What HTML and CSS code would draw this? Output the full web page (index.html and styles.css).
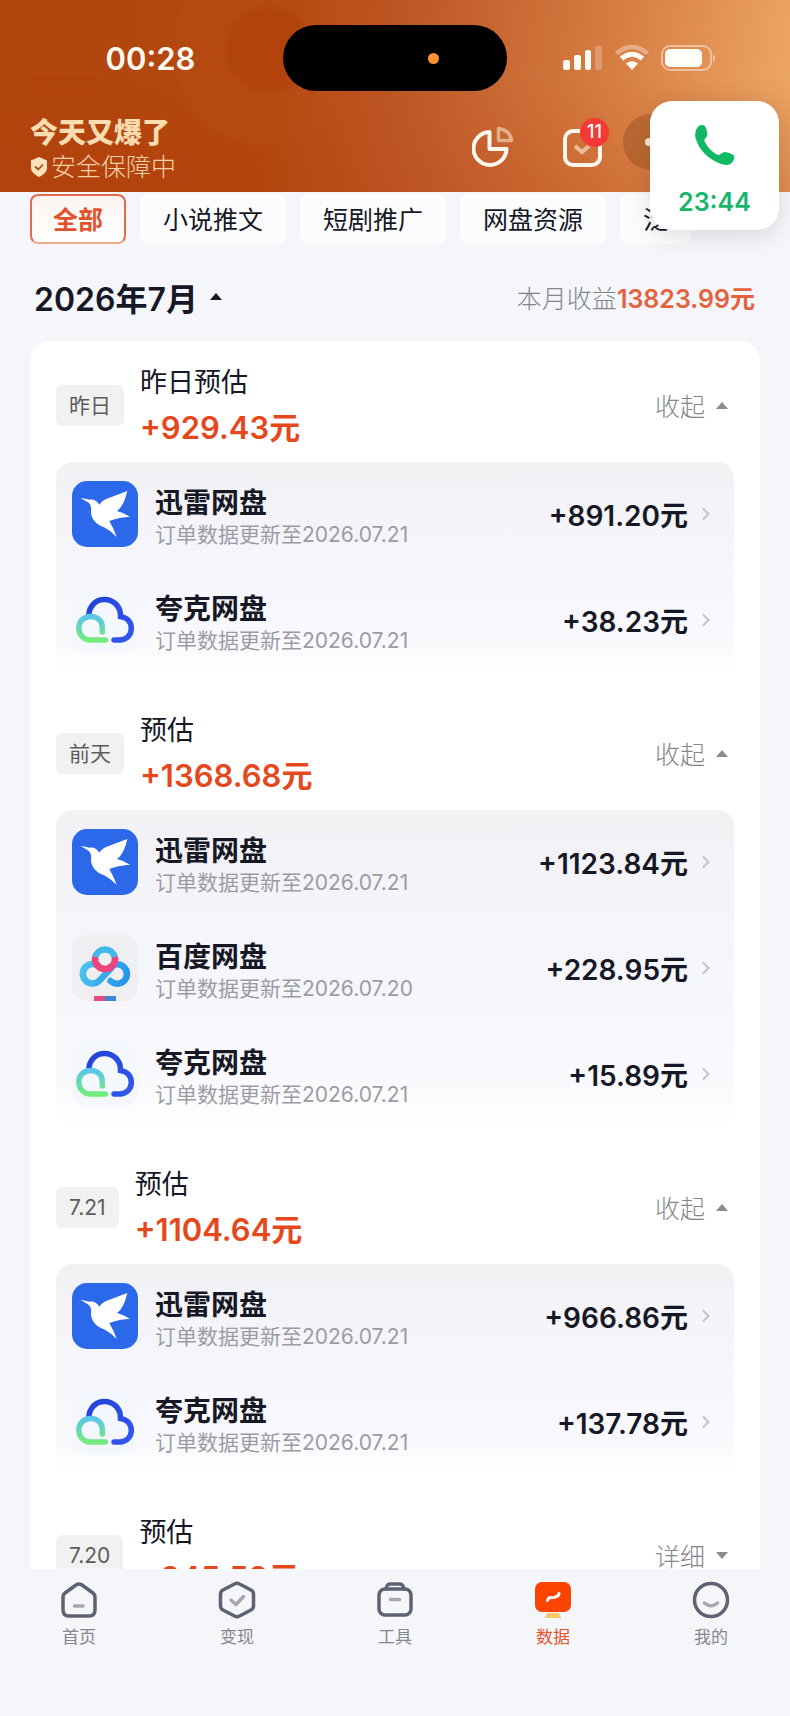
FILE: index.html
```html
<!DOCTYPE html>
<html lang="zh-CN">
<head>
<meta charset="utf-8">
<meta name="viewport" content="width=device-width, initial-scale=1">
<title>数据</title>
<link rel="stylesheet" href="styles.css">
</head>
<body>
<svg class="defs" aria-hidden="true">
  <defs>
    <linearGradient id="quark-green" x1="0" y1="0" x2="0" y2="1">
      <stop offset="0" stop-color="#5ac6ea"/><stop offset="1" stop-color="#74ec7c"/>
    </linearGradient>
    <linearGradient id="quark-blue" x1="0" y1="0" x2="1" y2="1">
      <stop offset="0" stop-color="#2443d8"/><stop offset="1" stop-color="#3158ee"/>
    </linearGradient>
    <linearGradient id="baidu-blue" gradientUnits="userSpaceOnUse" x1="8" y1="30" x2="58" y2="48">
      <stop offset="0" stop-color="#4cc6ee"/><stop offset="1" stop-color="#2290ea"/>
    </linearGradient>
    <symbol id="logo-xunlei" viewBox="0 0 66 66">
      <rect width="66" height="66" rx="15" fill="#2b69ea"/>
      <path fill="#fff" d="M8.500 17 Q14 17.500 17.500 18.800 C21 17.500 25 19.500 27.300 23.800 C29 21 31 19.500 33.500 18.300 L55.300 10 C54 15 53 19 51 22.500 C49.500 25.500 47.500 28 45 30 Q51 31.500 58 35.700 Q48 36 37.300 40 Q42 48 44.700 56 Q39 50 33 46.700 C28 45 24.500 43 22 39.500 C19.500 36 18.500 32.500 19.200 28.500 C19.300 24.500 17.500 22 15 20.800 Z"/>
    </symbol>
    <symbol id="logo-quark" viewBox="0 0 66 66">
      <rect width="66" height="66" rx="15" fill="#f4f7fe"/>
      <path d="M16.800 28 C17.500 18.500 24 12.500 32.500 12.500 C41.500 12.500 49 19.500 48.500 29.500 C55 30.500 59.300 35 59.300 41.500 C59.300 48 54.500 53 48 53 H42" fill="none" stroke="url(#quark-blue)" stroke-width="5.500" stroke-linecap="round"/>
      <path d="M30.300 45 V40.500 C30.300 34 25.500 29.500 18.500 29.500 C12 29.500 6.800 34.500 6.800 41 C6.800 48 12 53 18.500 53 H33.500" fill="none" stroke="url(#quark-green)" stroke-width="5.500" stroke-linecap="round"/>
    </symbol>
    <symbol id="logo-baidu" viewBox="0 0 66 66">
      <rect width="66" height="66" rx="15" fill="#efeff1"/>
      <g fill="none" stroke-width="6.500" stroke-linecap="round">
        <path d="M38.500 46 A9.700 9.700 0 1 0 38 32.500" stroke="url(#baidu-blue)"/>
        <path d="M40.500 31.500 L27.500 45.500 A9.700 9.700 0 1 1 27.500 32" stroke="url(#baidu-blue)"/>
        <path d="M23.200 22.500 A10 10 0 0 1 42.800 22.500" stroke="#3fb8ec" stroke-linecap="butt"/>
        <path d="M23.200 22 A10 10 0 1 0 42.800 22" stroke="#f2427a" stroke-linecap="butt"/>
      </g>
      <path d="M22 61h11v5H22z" fill="#ea4a80"/><path d="M33 61h11v5H33z" fill="#3a86dc"/>
    </symbol>
    <symbol id="chevron" viewBox="0 0 8 14">
      <path d="M1 1.500 6.500 7 1 12.500" fill="none" stroke="#c3c4c9" stroke-width="2"/>
    </symbol>
  </defs>
</svg>

<div class="app">
  <header class="header">
    <div class="status">
      <time class="status-time">00:28</time>
      <div class="island"><span class="island-dot"></span></div>
      <div class="status-icons">
        <svg width="40" height="26" viewBox="0 0 40 26" fill="#fffaf2" aria-hidden="true">
          <rect x="0" y="15" width="7" height="10" rx="2"/><rect x="11" y="10" width="7" height="15" rx="2"/><rect x="22" y="5" width="6" height="20" rx="2"/><rect x="32" y="1" width="7" height="24" rx="2" opacity=".25"/>
        </svg>
        <svg width="34" height="26" viewBox="0 0 34 26" fill="none" aria-hidden="true">
          <path d="M1.500 8.500 Q17 -4.500 32.500 8.500" stroke="#fff" stroke-width="4.500" opacity=".35"/>
          <path d="M6.500 13.500 Q17 5 27.500 13.500" stroke="#fffaf2" stroke-width="5"/>
          <path d="M11 18.500 Q17 14 23 18.500 L17 25Z" fill="#fffaf2"/>
        </svg>
        <svg width="56" height="26" viewBox="0 0 56 26" aria-hidden="true">
          <rect x="1" y="1" width="49" height="24" rx="8" fill="none" stroke="#fff" stroke-width="2" opacity=".45"/>
          <rect x="4" y="4" width="37" height="18" rx="5" fill="#fffdf8"/>
          <path d="M52 9 q4 4 0 8z" fill="#fff" opacity=".5"/>
        </svg>
      </div>
    </div>
    <div class="brand-row">
      <div>
        <h1 class="brand">今天又爆了</h1>
        <p class="safe">
          <svg width="18" height="20" viewBox="0 0 18 20" aria-hidden="true"><path d="M9 0 17 3.500 V11 C17 15 13 18 9 20 C5 18 1 15 1 11 V3.500Z" fill="#fde3bd"/><path d="M5 9.500 8.200 12.500 13 7.500" fill="none" stroke="#b3480f" stroke-width="1.800"/></svg>
          安全保障中
        </p>
      </div>
      <div class="header-actions">
        <button class="icon-button" aria-label="统计">
          <svg width="42" height="42" viewBox="0 0 42 42" fill="none" stroke="#fff8ee" stroke-width="4" stroke-linejoin="round"><path d="M17.500 6 A16.500 16.500 0 1 0 34.500 23 H17.500Z"/><path d="M26.500 2.500 V14.500 H39.500 C38.500 8 34 3.500 26.500 2.500Z" stroke-width="3.500" opacity=".5"/></svg>
        </button>
        <button class="icon-button mail" aria-label="消息">
          <svg width="40" height="42" viewBox="0 0 40 42" fill="none" stroke="#fff8ee" stroke-width="4"><rect x="2" y="5" width="35" height="34" rx="8"/><path d="M12 20 19 26 27 19" opacity=".55"/></svg>
          <span class="count">11</span>
        </button>
        <button class="capsule" aria-label="更多"><span class="capsule-dot"></span></button>
      </div>
    </div>
  </header>

  <main class="content">
    <nav class="chips" aria-label="分类">
      <button class="chip chip-active">全部</button>
      <button class="chip">小说推文</button>
      <button class="chip">短剧推广</button>
      <button class="chip">网盘资源</button>
      <button class="chip">泛</button>
    </nav>
    <div class="month-row">
      <button class="month">2026年7月<span class="caret caret-dark"></span></button>
      <p class="month-total">本月收益<strong>13823.99元</strong></p>
    </div>

    <div class="card">
      <section class="day">
        <div class="day-head">
          <span class="tag">昨日</span>
          <div class="day-text"><h2>昨日预估</h2><p class="sum">+929.43元</p></div>
          <button class="toggle">收起<span class="caret"></span></button>
        </div>
        <ul class="panel">
          <li><a class="row" href="#"><svg class="logo"><use href="#logo-xunlei"/></svg><span class="info"><b>迅雷网盘</b><small>订单数据更新至2026.07.21</small></span><span class="amount">+891.20元</span><svg class="chevron"><use href="#chevron"/></svg></a></li>
          <li><a class="row" href="#"><svg class="logo"><use href="#logo-quark"/></svg><span class="info"><b>夸克网盘</b><small>订单数据更新至2026.07.21</small></span><span class="amount">+38.23元</span><svg class="chevron"><use href="#chevron"/></svg></a></li>
        </ul>
      </section>

      <section class="day">
        <div class="day-head">
          <span class="tag">前天</span>
          <div class="day-text"><h2>预估</h2><p class="sum">+1368.68元</p></div>
          <button class="toggle">收起<span class="caret"></span></button>
        </div>
        <ul class="panel">
          <li><a class="row" href="#"><svg class="logo"><use href="#logo-xunlei"/></svg><span class="info"><b>迅雷网盘</b><small>订单数据更新至2026.07.21</small></span><span class="amount">+1123.84元</span><svg class="chevron"><use href="#chevron"/></svg></a></li>
          <li><a class="row" href="#"><svg class="logo"><use href="#logo-baidu"/></svg><span class="info"><b>百度网盘</b><small>订单数据更新至2026.07.20</small></span><span class="amount">+228.95元</span><svg class="chevron"><use href="#chevron"/></svg></a></li>
          <li><a class="row" href="#"><svg class="logo"><use href="#logo-quark"/></svg><span class="info"><b>夸克网盘</b><small>订单数据更新至2026.07.21</small></span><span class="amount">+15.89元</span><svg class="chevron"><use href="#chevron"/></svg></a></li>
        </ul>
      </section>

      <section class="day">
        <div class="day-head">
          <span class="tag">7.21</span>
          <div class="day-text"><h2>预估</h2><p class="sum">+1104.64元</p></div>
          <button class="toggle">收起<span class="caret"></span></button>
        </div>
        <ul class="panel">
          <li><a class="row" href="#"><svg class="logo"><use href="#logo-xunlei"/></svg><span class="info"><b>迅雷网盘</b><small>订单数据更新至2026.07.21</small></span><span class="amount">+966.86元</span><svg class="chevron"><use href="#chevron"/></svg></a></li>
          <li><a class="row" href="#"><svg class="logo"><use href="#logo-quark"/></svg><span class="info"><b>夸克网盘</b><small>订单数据更新至2026.07.21</small></span><span class="amount">+137.78元</span><svg class="chevron"><use href="#chevron"/></svg></a></li>
        </ul>
      </section>

      <section class="day">
        <div class="day-head">
          <span class="tag">7.20</span>
          <div class="day-text"><h2>预估</h2><p class="sum">+845.59元</p></div>
          <button class="toggle">详细<span class="caret caret-down"></span></button>
        </div>
      </section>
    </div>
  </main>

  <nav class="tabbar" aria-label="主导航">
    <a class="tab" href="#"><svg width="38" height="38" viewBox="0 0 38 38" fill="none" stroke="#5f6272" stroke-width="3.500" stroke-linejoin="round" stroke-linecap="round"><path d="M3 16 Q3 13.500 5 12 L16 4 Q19 2 22 4 L33 12 Q35 13.500 35 16 V29 Q35 35 29 35 H9 Q3 35 3 29Z"/><path d="M14.500 25 H23" stroke="#a5a7b3"/></svg>首页</a>
    <a class="tab" href="#"><svg width="38" height="38" viewBox="0 0 38 38" fill="none" stroke="#5f6272" stroke-width="3.500" stroke-linejoin="round" stroke-linecap="round"><path d="M16.500 3 Q19 1.500 21.500 3 L33 9 Q35.500 10.500 35.500 13 V25 Q35.500 27.500 33 29 L21.500 35 Q19 36.500 16.500 35 L5 29 Q2.500 27.500 2.500 25 V13 Q2.500 10.500 5 9Z"/><path d="M13 19 18 23.500 25.500 15.500" stroke="#a5a7b3"/></svg>变现</a>
    <a class="tab" href="#"><svg width="38" height="38" viewBox="0 0 38 38" fill="none" stroke="#5f6272" stroke-width="3.500" stroke-linejoin="round" stroke-linecap="round"><rect x="3" y="8" width="32" height="26" rx="6"/><path d="M10 8 L11 5 Q12 3 14 3 H24 Q26 3 27 5 L28 8"/><path d="M14.500 18.500 H23.500" stroke="#a5a7b3"/></svg>工具</a>
    <a class="tab tab-active" href="#" aria-current="page"><svg width="38" height="38" viewBox="0 0 38 38" fill="none"><path d="M13 32 H25 L27 37 H11Z" fill="#f9c56d"/><rect x="1" y="1" width="36" height="30" rx="7" fill="#fb4400"/><path d="M13.500 19.500 Q14.500 16 17.500 16.500 Q21 17 22 15.500 Q24.500 15.500 25 12.500" stroke="#fff" stroke-width="3" stroke-linecap="round"/></svg>数据</a>
    <a class="tab" href="#"><svg width="38" height="38" viewBox="0 0 38 38" fill="none" stroke="#5f6272" stroke-width="3.500" stroke-linecap="round"><circle cx="19" cy="19" r="16.500"/><path d="M12.500 22 Q19 27.500 25.500 22" stroke="#a5a7b3"/></svg>我的</a>
  </nav>

  <aside class="call">
    <svg width="40" height="40" viewBox="0 0 40 40" aria-hidden="true"><path fill="#10b964" d="M4 1 C7 -1 10 0 11 3 C12 6 12.800 9 12 11 C11.200 13 9 14 9.500 16 C12 22 17 27 23 30 C25 30.500 27 27 30 27 C33 27.300 36 28.500 38.500 30 C41 32 38 37 36 38.500 C34 40.500 29 40 26 39 C13 34 4 25 .5 13 C-.5 8 1 3 4 1Z"/></svg>
    <span>23:44</span>
  </aside>
</div>
</body>
</html>
```
FILE: styles.css
```css
* { box-sizing: border-box; }
body, h1, h2, p, ul { margin: 0; padding: 0; }
body {
  font-family: Inter, "Noto Sans CJK SC", sans-serif;
  color: #171826;
  background: #f5f6fa;
}
button {
  font: inherit;
  color: inherit;
  background: none;
  border: 0;
  padding: 0;
}
a { color: inherit; text-decoration: none; }
ul { list-style: none; }
.defs { position: absolute; width: 0; height: 0; }

.app {
  position: relative;
  display: flex;
  flex-direction: column;
  height: 100vh;
  overflow: hidden;
}

/* header */
.header {
  flex: none;
  height: 192px;
  background:
    linear-gradient(#a8360020, #a8360020) 30px 10px / 64px 20px no-repeat,
    linear-gradient(#a8360020, #a8360020) 30px 76px / 68px 22px no-repeat,
    radial-gradient(circle at 34% 26%, #a8360055 0 38px, transparent 48px),
    radial-gradient(circle at 34% 26%, #c0562026 0 94px, transparent 98px),
    linear-gradient(to bottom, transparent 40%, #b03c0c44),
    linear-gradient(100deg, #b2440e 0%, #b5470f 35%, #c05a28 52%, #d67c42 75%, #eeaa68 100%);
}
.status {
  display: grid;
  grid-template-columns: 1fr 224px 1fr;
  align-items: center;
  justify-items: center;
  padding: 25px 18px 0;
}
.status-time { font-size: 31px; font-weight: 600; color: #fffaf0; }
.island {
  display: flex;
  align-items: center;
  justify-content: flex-end;
  width: 100%;
  height: 66px;
  padding-right: 68px;
  background: #000;
  border-radius: 33px;
}
.island-dot { width: 11px; height: 11px; border-radius: 50%; background: #fc9432; }
.status-icons { display: flex; align-items: center; gap: 12px; }
.brand-row {
  display: flex;
  justify-content: space-between;
  padding: 23px 30px 0;
}
.brand { font-size: 28px; line-height: 38px; font-weight: 900; color: #fddcb0; }
.safe {
  display: flex;
  align-items: center;
  gap: 3px;
  font-size: 25px;
  line-height: 30px;
  font-weight: 300;
  color: #f8cfa8;
}
.header-actions { display: flex; align-items: center; height: 66px; }
.icon-button { display: flex; margin-right: 49px; }
.mail { position: relative; margin-right: 20px; }
.count {
  position: absolute;
  top: -8px;
  right: -6px;
  width: 29px;
  height: 29px;
  border-radius: 50%;
  background: #f53a36;
  color: #fff;
  font-size: 18px;
  line-height: 28px;
  font-weight: 500;
  text-align: center;
}
.capsule {
  display: flex;
  align-items: center;
  width: 137px;
  height: 56px;
  padding-left: 22px;
  margin-bottom: 10px;
  border-radius: 28px;
  background: #8f4a1c66;
}
.capsule-dot { width: 8px; height: 8px; border-radius: 50%; background: #fbe3cf; }

/* content */
.content { flex: 1; min-height: 0; overflow: hidden; }
.chips { display: flex; gap: 14px; padding: 2px 0 0 30px; overflow: hidden; }
.chip {
  flex: none;
  height: 50px;
  padding: 0 23px 3px;
  border-radius: 8px;
  background: #fcfcfe;
  font-size: 25px;
}
.chip-active {
  border: 2px solid #e46a4e;
  border-bottom-color: #f2a98f;
  padding: 0 21px 3px;
  background: linear-gradient(#fbf4f0, #fff);
  color: #e2512c;
  font-weight: 700;
}
.month-row {
  display: flex;
  align-items: center;
  justify-content: space-between;
  height: 97px;
  padding: 8px 35px 0 34px;
}
.month { display: flex; align-items: center; gap: 12px; font-size: 32px; font-weight: 600; }
.month-total { font-size: 25px; font-weight: 300; color: #85868c; }
.month-total strong { font-weight: 600; color: #e5623f; }
.caret {
  width: 0;
  height: 0;
  border: 6px solid transparent;
  border-top: 0;
  border-bottom: 7px solid #8b8c90;
}
.caret-dark { border-bottom-color: #171826; }
.caret-down { border-bottom: 0; border-top: 7px solid #8b8c90; }

.card {
  margin: 0 30px;
  padding: 19px 26px 0;
  background: #fff;
  border-radius: 20px 20px 0 0;
}
.day { margin-bottom: 34px; }
.day-head { display: flex; align-items: center; height: 90px; margin-bottom: 12px; }
.tag {
  padding: 0 13px;
  border-radius: 6px;
  background: #f1f1f2;
  color: #5c5c60;
  font-size: 21px;
  line-height: 41px;
}
.day-text { flex: 1; margin-left: 16px; }
.day-text h2 { font-size: 27px; line-height: 45px; font-weight: 400; }
.sum { font-size: 31px; line-height: 45px; font-weight: 600; color: #e5481d; }
.toggle {
  display: flex;
  align-items: center;
  gap: 11px;
  margin-right: 6px;
  font-size: 25px;
  font-weight: 300;
  color: #85868c;
}
.panel {
  border-radius: 16px;
  background: linear-gradient(#f2f2f5, #f5f5fc 45%, #f8f8fd 80%, #fff);
}
.row { display: flex; align-items: center; height: 106px; padding: 0 24px 3px 16px; }
.logo { width: 66px; height: 66px; margin-right: 17px; }
.info { display: flex; flex-direction: column; flex: 1; padding-top: 8px; }
.info b { font-size: 28px; line-height: 34px; font-weight: 700; }
.info small { font-size: 21px; line-height: 30px; font-weight: 400; color: #9b9ca3; }
.amount { font-size: 28px; font-weight: 600; }
.chevron { width: 8px; height: 14px; margin-left: 14px; }

/* bottom navigation */
.tabbar {
  flex: none;
  display: grid;
  grid-template-columns: repeat(5, 1fr);
  height: 147px;
  padding-top: 12px;
  background: #f5f6fa;
}
.tab {
  display: flex;
  flex-direction: column;
  align-items: center;
  gap: 6px;
  font-size: 17px;
  line-height: 24px;
  color: #85868e;
}
.tab-active { color: #e5532f; }

/* floating call window */
.call {
  position: absolute;
  top: 101px;
  right: 11px;
  display: flex;
  flex-direction: column;
  align-items: center;
  gap: 22px;
  width: 129px;
  height: 129px;
  padding-top: 24px;
  border-radius: 22px;
  background: #fff;
  box-shadow: 0 6px 24px #0000001f;
  color: #18b56c;
  font-size: 25px;
  line-height: 30px;
  font-weight: 600;
}
```
